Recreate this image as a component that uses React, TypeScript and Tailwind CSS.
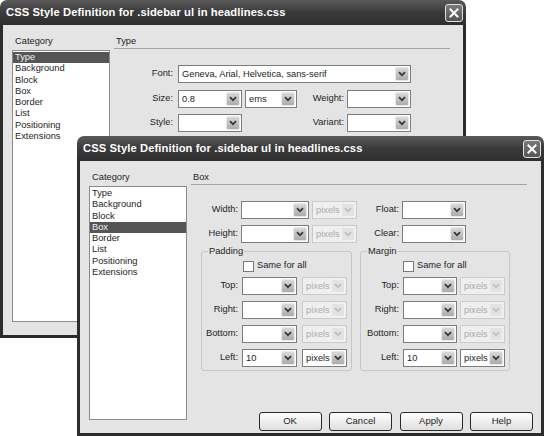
import React from 'react';

const categories = ['Type', 'Background', 'Block', 'Box', 'Border', 'List', 'Positioning', 'Extensions'];

const Chevron = ({ faded = false }: { faded?: boolean }) => (
  <svg width="8" height="6" viewBox="0 0 8 6">
    <path d="M1 1.2 L4 4.3 L7 1.2" fill="none" stroke={faded ? '#bdbdbd' : '#353535'} strokeWidth="1.8" />
  </svg>
);

interface SelectProps {
  className: string;
  value?: string;
  disabled?: boolean;
}

const Select: React.FC<SelectProps> = ({ className, value = '', disabled = false }) => (
  <div
    className={`flex h-[18px] items-stretch border ${className} ${
      disabled ? 'border-[#cbcbcb] bg-[#efefef] text-[#ababab]' : 'border-[#7d7d7d] bg-white text-[#1e1e1e]'
    }`}
  >
    <span className="min-w-0 flex-1 whitespace-nowrap pl-[3px] leading-[16px]">{value}</span>
    <span
      className={`m-px flex w-[14px] shrink-0 items-center justify-center rounded-[2px] border ${
        disabled
          ? 'border-[#f2f2f2] bg-[#e3e3e3]'
          : 'border-[#e9e9e9] bg-linear-to-b from-[#d9d9d9] to-[#acacac]'
      }`}
    >
      <Chevron faded={disabled} />
    </span>
  </div>
);

const CloseButton = () => (
  <div className="flex h-[18px] w-[18px] items-center justify-center rounded-[3px] border border-[#e2e2e2] bg-linear-to-b from-[#7a7a7a] to-[#555555]">
    <svg width="10" height="10" viewBox="0 0 10 10">
      <path d="M1.5 1.5 L8.5 8.5 M8.5 1.5 L1.5 8.5" stroke="#ffffff" strokeWidth="2" strokeLinecap="square" />
    </svg>
  </div>
);

const CategoryList = ({ selected, listH }: { selected: string; listH: string }) => (
  <div className="w-[98px]">
    <div className="h-[12px] pl-[3px] leading-[12px]">Category</div>
    <div className={`mt-[3px] border border-[#8c8c8c] bg-white pt-px ${listH}`}>
      {categories.map((c) => (
        <div
          key={c}
          className={`h-[11.3px] pl-[2px] leading-[11.3px] ${
            c === selected ? 'bg-[#555555] text-[#f0f0f0]' : 'text-[#1e1e1e]'
          }`}
        >
          {c}
        </div>
      ))}
    </div>
  </div>
);

const Window = ({ title, className, children }: { title: string; className: string; children: React.ReactNode }) => (
  <div className={`absolute flex flex-col ${className}`}>
    <div className="flex h-[25px] items-center justify-between rounded-t-[7px] bg-linear-to-b from-[#5a5a5a] via-[#3a3a3a] to-[#2e2e2e] pl-[6px] pr-[3px]">
      <span className="text-[11.2px] font-bold tracking-[0.1px] text-white">{title}</span>
      <CloseButton />
    </div>
    <div className="flex flex-1 border-x-[3px] border-b-[3px] border-[#2c2c2c] bg-[#e4e4e4] pl-[9px] pt-[10px]">
      {children}
    </div>
  </div>
);

const Heading = ({ text }: { text: string }) => (
  <div className="h-[14px] w-[336px] border-b border-[#a3a3a3] pl-[2px] leading-[12px]">{text}</div>
);

const Label = ({ text, className }: { text: string; className: string }) => (
  <span className={`whitespace-nowrap text-right ${className}`}>{text}</span>
);

const BoxRow = ({ label, value = '', labelW, selW, gap, unitEnabled = false }: {
  label: string;
  value?: string;
  labelW: string;
  selW: string;
  gap: string;
  unitEnabled?: boolean;
}) => (
  <div className="flex items-center">
    <Label text={label} className={`${labelW} pr-[4px]`} />
    <Select className={selW} value={value} />
    <Select className={`w-[45px] ${gap}`} value="pixels" disabled={!unitEnabled} />
  </div>
);

const Fieldset = ({ legend, className, labelW, selW, gap, boxMl }: {
  legend: string;
  className: string;
  labelW: string;
  selW: string;
  gap: string;
  boxMl: string;
}) => (
  <fieldset className={`rounded-[3px] border border-[#c6c6c6] pb-[3px] ${className}`}>
    <legend className="ml-[6px] px-px leading-[12px]">{legend}</legend>
    <div className={`mt-[3px] flex h-[12px] items-center ${boxMl}`}>
      <span className="h-[11px] w-[11px] border border-[#7a7a7a] bg-white" />
      <span className="ml-[3px]">Same for all</span>
    </div>
    <div className="mt-[5px] flex flex-col gap-[6px]">
      <BoxRow label="Top:" labelW={labelW} selW={selW} gap={gap} />
      <BoxRow label="Right:" labelW={labelW} selW={selW} gap={gap} />
      <BoxRow label="Bottom:" labelW={labelW} selW={selW} gap={gap} />
      <BoxRow label="Left:" value="10" labelW={labelW} selW={selW} gap={gap} unitEnabled />
    </div>
  </fieldset>
);

const DlgButton = ({ text }: { text: string }) => (
  <button className="h-[19px] w-[63px] rounded-[3px] border border-[#2a2a2a] bg-linear-to-b from-white to-[#dedede] text-[9.5px] text-[#1e1e1e]">
    {text}
  </button>
);

export default function App() {
  return (
    <div className="relative h-[436px] w-[550px] overflow-hidden bg-white font-['Liberation_Sans',Arial,sans-serif] text-[9.3px] text-[#1e1e1e]">
      {/* Type dialog, behind */}
      <Window title="CSS Style Definition for .sidebar ul in headlines.css" className="left-0 top-0 h-[338px] w-[466px]">
        <CategoryList selected="Type" listH="h-[272px]" />
        <div className="ml-[4px] flex flex-1 flex-col">
          <Heading text="Type" />
          <div className="mt-[16px] flex items-center">
            <Label text="Font:" className="w-[64px] pr-[5px]" />
            <Select className="w-[233px]" value="Geneva, Arial, Helvetica, sans-serif" />
          </div>
          <div className="mt-[7px] flex items-center">
            <Label text="Size:" className="w-[64px] pr-[5px]" />
            <Select className="w-[64px]" value="0.8" />
            <Select className="ml-[3px] w-[52px]" value="ems" />
            <Label text="Weight:" className="w-[50px] pr-[3px]" />
            <Select className="w-[64px]" />
          </div>
          <div className="mt-[6px] flex items-center">
            <Label text="Style:" className="w-[64px] pr-[5px]" />
            <Select className="w-[64px]" />
            <span className="w-[55px]" />
            <Label text="Variant:" className="w-[50px] pr-[3px]" />
            <Select className="w-[64px]" />
          </div>
        </div>
      </Window>

      {/* Box dialog, in front */}
      <Window title="CSS Style Definition for .sidebar ul in headlines.css" className="left-[77px] top-[136px] h-[300px] w-[467px]">
        <CategoryList selected="Box" listH="h-[234px]" />
        <div className="ml-[4px] flex flex-1 flex-col">
          <Heading text="Box" />
          <div className="mt-[16px] flex items-center">
            <Label text="Width:" className="w-[50px] pr-[3px]" />
            <Select className="w-[68px]" />
            <Select className="ml-[3px] w-[45px]" value="pixels" disabled />
            <Label text="Float:" className="w-[45px] pr-[3px]" />
            <Select className="w-[64px]" />
          </div>
          <div className="mt-[6px] flex items-center">
            <Label text="Height:" className="w-[50px] pr-[3px]" />
            <Select className="w-[68px]" />
            <Select className="ml-[3px] w-[45px]" value="pixels" disabled />
            <Label text="Clear:" className="w-[45px] pr-[3px]" />
            <Select className="w-[64px]" />
          </div>
          <div className="ml-[10px] mt-[2px] flex gap-[8px]">
            <Fieldset legend="Padding" className="w-[151px]" labelW="w-[40px]" selW="w-[55px]" gap="ml-[5px]" boxMl="ml-[41px]" />
            <Fieldset legend="Margin" className="w-[150px]" labelW="w-[42px]" selW="w-[54px]" gap="ml-[3px]" boxMl="ml-[42px]" />
          </div>
          <div className="mt-[41px] flex justify-end gap-[7.5px] pr-[8px]">
            <DlgButton text="OK" />
            <DlgButton text="Cancel" />
            <DlgButton text="Apply" />
            <DlgButton text="Help" />
          </div>
        </div>
      </Window>
    </div>
  );
}
